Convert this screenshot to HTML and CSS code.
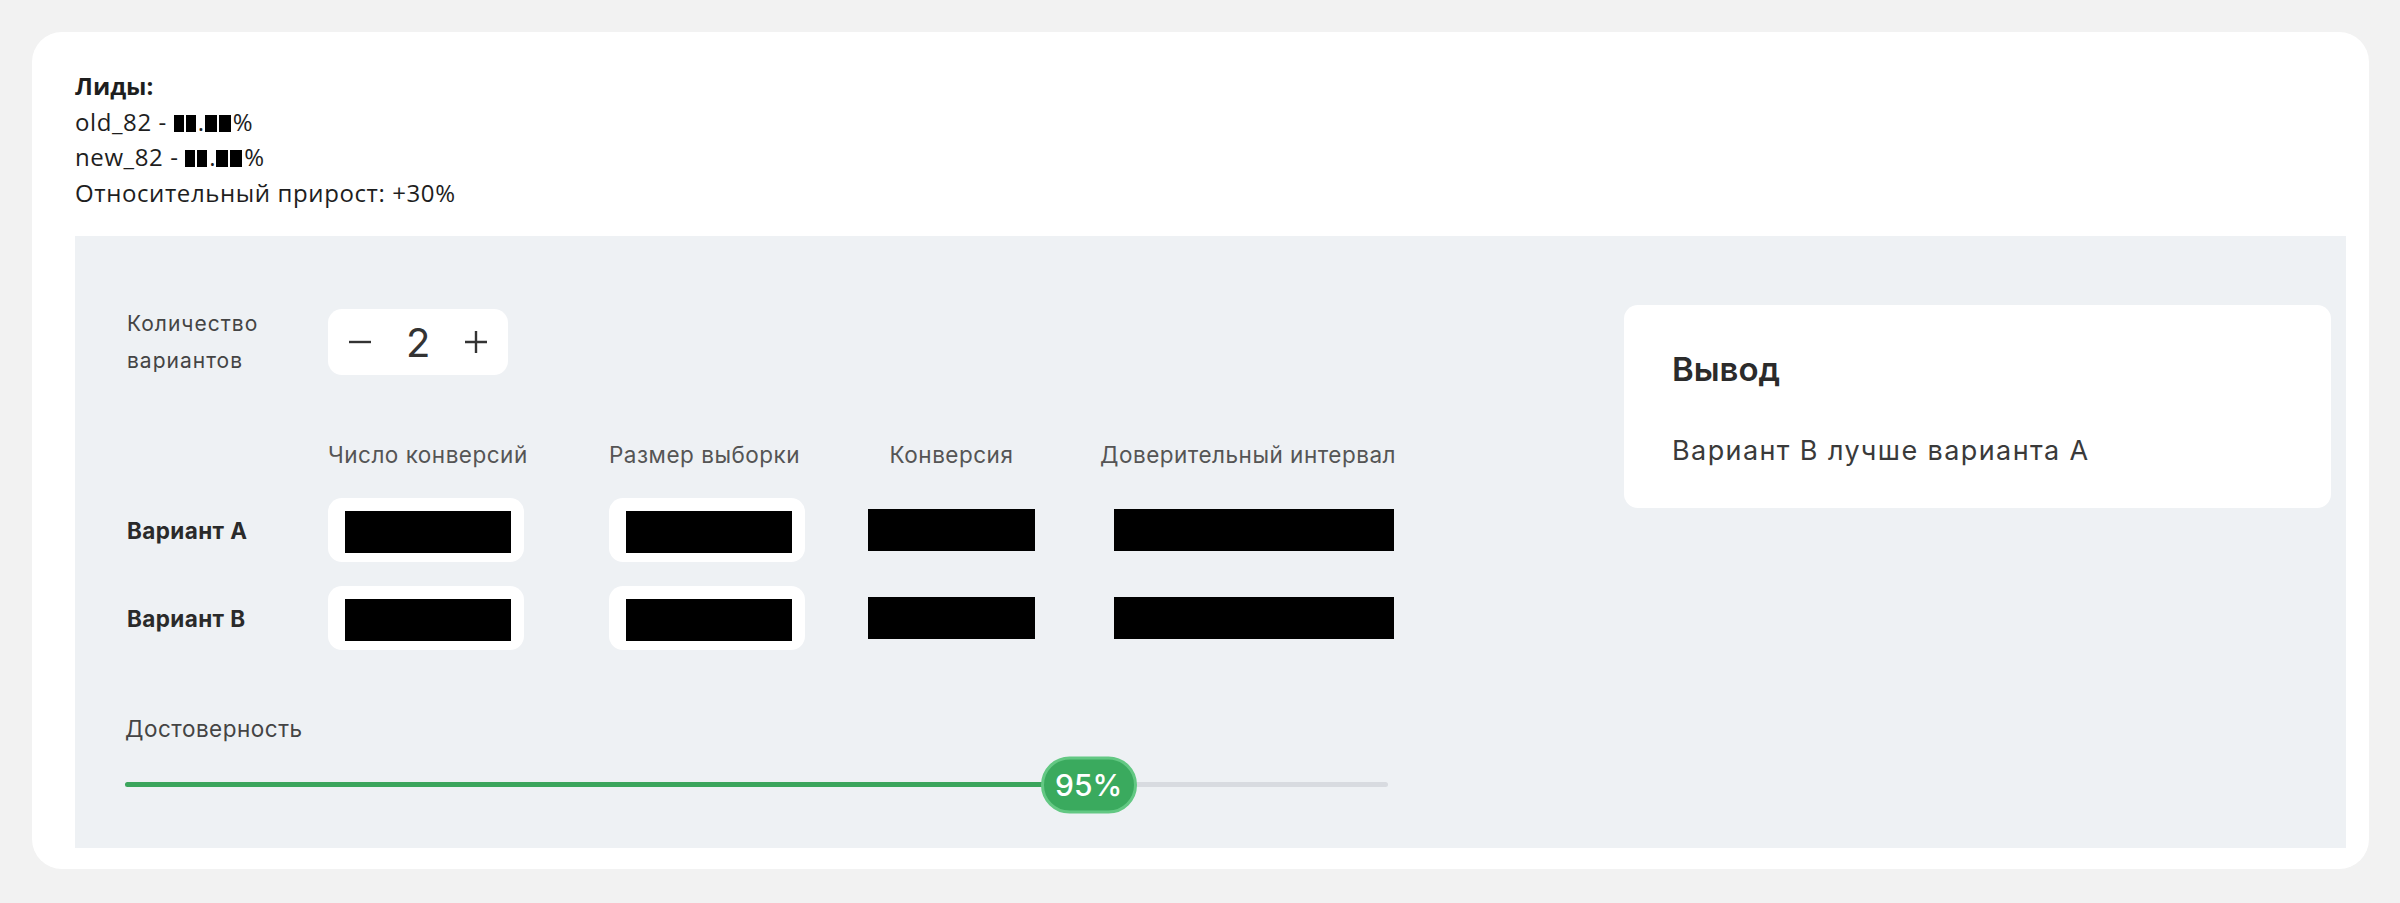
FILE: index.html
```html
<!DOCTYPE html>
<html lang="ru">
<head>
    <meta charset="UTF-8">
    <meta name="viewport" content="width=device-width, initial-scale=1.0">
    <title>A/B калькулятор</title>
    <link rel="stylesheet" href="styles.css">
</head>
<body>
    <div class="card">
        <div class="summary">
            <b>Лиды:</b><br>
            old_82 - <span class="mask"></span><span class="mask"></span>.<span class="mask wide"></span><span class="mask wide"></span>%<br>
            new_82 - <span class="mask"></span><span class="mask"></span>.<span class="mask wide"></span><span class="mask wide"></span>%<br>
            Относительный прирост: +30%
        </div>

        <div class="calc">
            <div class="calc-main">
                <div class="count-row">
                    <div class="count-label">Количество<br>вариантов</div>
                    <div class="stepper">
                        <svg class="stepper-btn" width="24" height="24" viewBox="0 0 24 24"><path d="M1 12h22"/></svg>
                        <span class="stepper-value">2</span>
                        <svg class="stepper-btn" width="24" height="24" viewBox="0 0 24 24"><path d="M1 12h22M12 1v22"/></svg>
                    </div>
                </div>

                <div class="variants">
                    <div></div>
                    <div class="head">Число конверсий</div>
                    <div class="head">Размер выборки</div>
                    <div class="head center">Конверсия</div>
                    <div class="head right">Доверительный интервал</div>

                    <div class="variant-name">Вариант А</div>
                    <div class="field"><span class="hidden-value"></span></div>
                    <div class="field"><span class="hidden-value"></span></div>
                    <div class="out"><span class="hidden-value conv"></span></div>
                    <div class="out right"><span class="hidden-value interval"></span></div>

                    <div class="variant-name">Вариант В</div>
                    <div class="field"><span class="hidden-value"></span></div>
                    <div class="field"><span class="hidden-value"></span></div>
                    <div class="out"><span class="hidden-value conv"></span></div>
                    <div class="out right"><span class="hidden-value interval"></span></div>
                </div>

                <div class="confidence">
                    <div class="confidence-label">Достоверность</div>
                    <div class="slider">
                        <div class="slider-track">
                            <div class="slider-fill" style="width: 76.3%"></div>
                        </div>
                        <div class="slider-thumb" style="left: 76.3%">95%</div>
                    </div>
                </div>
            </div>

            <div class="result">
                <h3>Вывод</h3>
                <p>Вариант В лучше варианта А</p>
            </div>
        </div>
    </div>
</body>
</html>
```

FILE: styles.css
```css
body {
    margin: 0;
    padding: 32px 31px 34px 32px;
    background: #f2f2f2;
    font-family: Inter, "Noto Sans", sans-serif;
    color: #333;
}
.card {
    background: #fff;
    border-radius: 30px;
    padding: 36px 23px 21px 43px;
}

/* верхний блок с цифрами */
.summary {
    font-family: "Open Sans", "Liberation Sans", sans-serif;
    font-size: 24px;
    line-height: 35.5px;
    letter-spacing: 0.6px;
    color: #1e1e1e;
    margin-bottom: 26px;
}
.summary b {
    letter-spacing: 0;
}
.mask {
    display: inline-block;
    width: 10px;
    height: 17px;
    margin-right: 2px;
    background: #000;
    vertical-align: -1px;
}
.mask.wide {
    width: 12px;
}

/* калькулятор */
.calc {
    display: flex;
    justify-content: space-between;
    align-items: flex-start;
    height: 612px;
    box-sizing: border-box;
    padding: 69px 15px 0 52px;
    background: #eef1f4;
}
.count-row {
    display: flex;
    align-items: center;
}
.count-label {
    width: 201px;
    font-size: 21px;
    line-height: 37px;
    letter-spacing: 1px;
    color: #444;
}
.stepper {
    display: flex;
    align-items: center;
    height: 66px;
    padding: 0 20px;
    background: #fff;
    border-radius: 14px;
}
.stepper-btn {
    stroke: #333;
    stroke-width: 2.4;
    fill: none;
}
.stepper-value {
    width: 24px;
    margin: 0 34px;
    font-size: 40px;
    text-align: center;
    color: #333;
}

.variants {
    display: grid;
    grid-template-columns: 201px 281px 259px 232px 294px;
    row-gap: 24px;
    align-items: center;
    margin-top: 62px;
}
.head {
    font-size: 22.5px;
    line-height: 28px;
    letter-spacing: 0.5px;
    color: #555;
    margin-bottom: 5px;
    white-space: nowrap;
}
.center {
    width: 167px;
    text-align: center;
}
.right {
    text-align: right;
}
.variant-name {
    font-size: 22.5px;
    font-weight: 700;
    letter-spacing: 0.4px;
    color: #2a2a2a;
}
.field {
    width: 196px;
    height: 64px;
    box-sizing: border-box;
    padding: 13px 0 0 17px;
    background: #fff;
    border-radius: 14px;
}
.hidden-value {
    display: block;
    width: 166px;
    height: 42px;
    background: #000;
}
.out .conv {
    width: 167px;
}
.out.right .interval {
    width: 280px;
    margin-left: auto;
}

.confidence {
    margin-top: 65px;
}
.confidence-label {
    font-size: 22.5px;
    line-height: 28px;
    letter-spacing: 0.5px;
    color: #444;
    margin-left: -2px;
}
.slider {
    position: relative;
    width: 1263px;
    height: 57px;
    margin: 13px 0 0 -2px;
    display: flex;
    align-items: center;
}
.slider-track {
    width: 100%;
    height: 5px;
    background: #d8dbe0;
    border-radius: 3px;
}
.slider-fill {
    height: 100%;
    background: #3ba55c;
    border-radius: 3px;
}
.slider-thumb {
    position: absolute;
    top: 50%;
    transform: translate(-50%, -50%);
    width: 96px;
    height: 57px;
    box-sizing: border-box;
    border: 3px solid #63c883;
    border-radius: 29px;
    background: #3aaa5e;
    color: #fff;
    font-size: 30px;
    font-weight: 500;
    line-height: 51px;
    text-align: center;
}

/* карточка с выводом */
.result {
    width: 707px;
    height: 203px;
    box-sizing: border-box;
    padding: 44px 48px;
    background: #fff;
    border-radius: 14px;
}
.result h3 {
    margin: 0;
    font-size: 33px;
    line-height: 40px;
    font-weight: 600;
    color: #2b2b2b;
}
.result p {
    margin: 45px 0 0;
    font-size: 27px;
    line-height: 34px;
    letter-spacing: 1.4px;
    color: #3a3a3a;
}
```
